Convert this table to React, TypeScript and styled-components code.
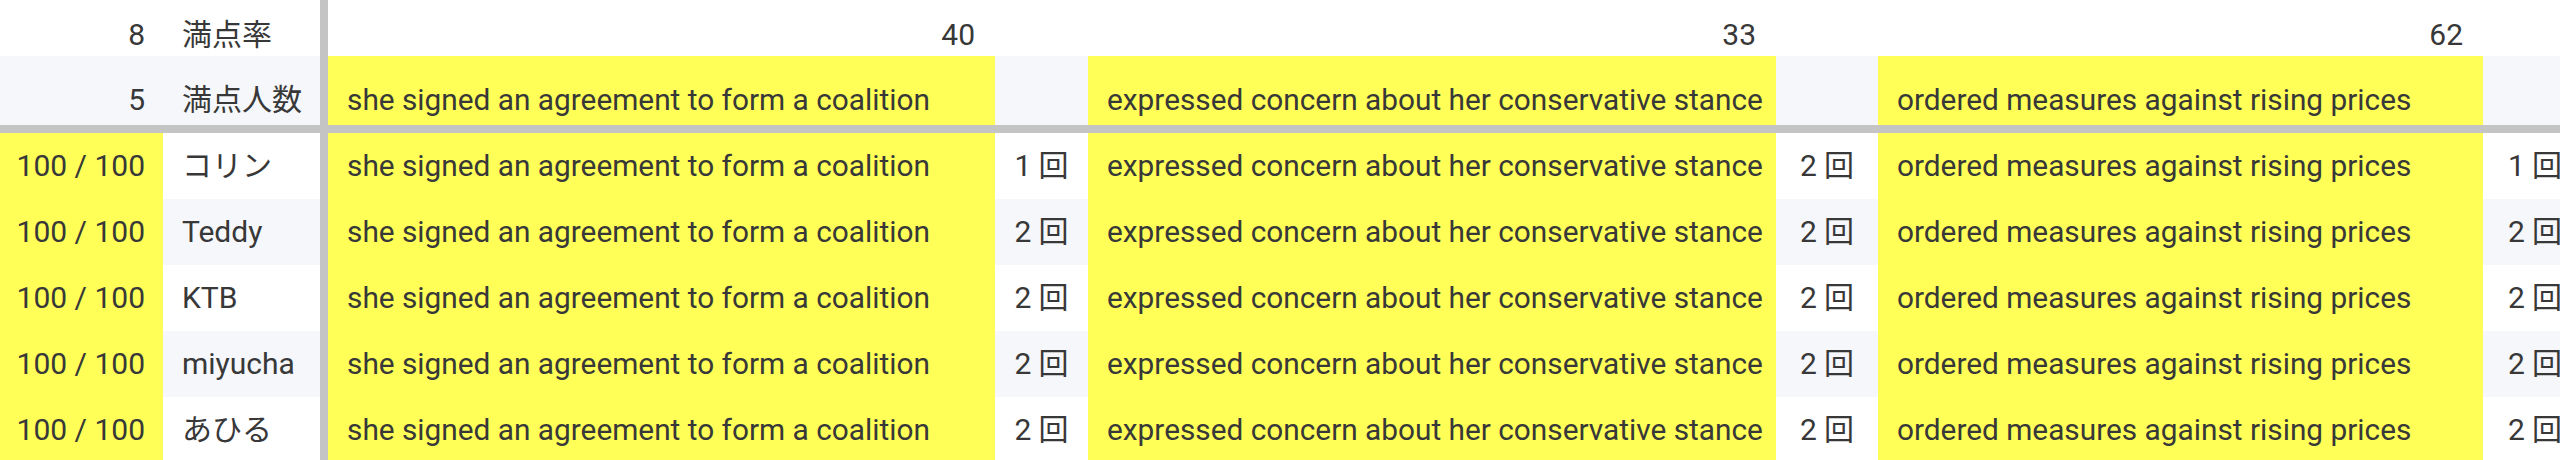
import React from "react";
import styled, { createGlobalStyle, css } from "styled-components";

const GlobalStyle = createGlobalStyle`
  html, body {
    margin: 0;
    padding: 0;
    background: #ffffff;
    overflow: hidden;
  }
  body {
    font-family: Roboto, "Noto Sans CJK JP", sans-serif;
    color: #383838;
  }
`;

const COLS = "163px 157px 8px 667px 93px 688px 102px 605px 104px";

const YELLOW = "#ffff57";
const STRIPE = "#f5f7fa";
const LINE = "#c4c4c4";

type Tone = "white" | "stripe" | "yellow" | "line";

const toneColor = (t: Tone) =>
  t === "yellow" ? YELLOW : t === "stripe" ? STRIPE : t === "line" ? LINE : "#ffffff";

const Table = styled.div`
  display: flex;
  flex-direction: column;
  width: 2587px;
`;

const Row = styled.div<{ $h: number; $valign: "end" | "center"; $pb?: number }>`
  display: grid;
  grid-template-columns: ${COLS};
  height: ${(p) => p.$h}px;
  & > * {
    align-items: ${(p) => (p.$valign === "end" ? "flex-end" : "center")};
    padding-bottom: ${(p) => p.$pb ?? 0}px;
  }
`;

const Cell = styled.div<{ $tone?: Tone; $align?: "left" | "right" | "center" }>`
  display: flex;
  box-sizing: border-box;
  background: ${(p) => toneColor(p.$tone ?? "white")};
  font-size: 30px;
  line-height: 30px;
  white-space: nowrap;
  overflow: hidden;
  ${(p) =>
    p.$align === "right"
      ? css`justify-content: flex-end; padding-right: 18px;`
      : p.$align === "center"
      ? css`justify-content: center;`
      : css`justify-content: flex-start; padding-left: 19px;`}
`;

const PhraseCell = styled(Cell)`
  font-size: 29.8px;
`;

const NumberCell = styled(Cell)`
  padding-right: 20px;
`;

const Times = styled.span`
  margin-left: 7px;
`;

const Separator = styled.div`
  background: ${LINE};
`;

const HRule = styled.div`
  height: 8px;
  background: ${LINE};
`;

const questions = [
  { text: "she signed an agreement to form a coalition", rate: 40 },
  { text: "expressed concern about her conservative stance", rate: 33 },
  { text: "ordered measures against rising prices", rate: 62 },
];

const people = [
  { score: "100 / 100", name: "コリン", counts: [1, 2, 1] },
  { score: "100 / 100", name: "Teddy", counts: [2, 2, 2] },
  { score: "100 / 100", name: "KTB", counts: [2, 2, 2] },
  { score: "100 / 100", name: "miyucha", counts: [2, 2, 2] },
  { score: "100 / 100", name: "あひる", counts: [2, 2, 2] },
];

export default function App() {
  return (
    <>
      <GlobalStyle />
      <Table>
        <Row $h={56} $valign="end" $pb={6}>
          <Cell $align="right">8</Cell>
          <Cell>満点率</Cell>
          <Separator />
          {questions.map((q) => (
            <React.Fragment key={q.text}>
              <NumberCell $align="right">{q.rate}</NumberCell>
              <Cell />
            </React.Fragment>
          ))}
        </Row>
        <Row $h={69} $valign="end" $pb={10}>
          <Cell $tone="stripe" $align="right">5</Cell>
          <Cell $tone="stripe">満点人数</Cell>
          <Separator />
          {questions.map((q) => (
            <React.Fragment key={q.text}>
              <PhraseCell $tone="yellow">{q.text}</PhraseCell>
              <Cell $tone="stripe" />
            </React.Fragment>
          ))}
        </Row>
        <HRule />
        {people.map((p, i) => {
          const tone: Tone = i % 2 === 1 ? "stripe" : "white";
          return (
            <Row key={p.name} $h={66} $valign="center">
              <Cell $tone="yellow" $align="right">{p.score}</Cell>
              <Cell $tone={tone}>{p.name}</Cell>
              <Separator />
              {questions.map((q, j) => (
                <React.Fragment key={q.text}>
                  <PhraseCell $tone="yellow">{q.text}</PhraseCell>
                  <Cell $tone={tone} $align="center">
                    {p.counts[j]}
                    <Times>回</Times>
                  </Cell>
                </React.Fragment>
              ))}
            </Row>
          );
        })}
      </Table>
    </>
  );
}
